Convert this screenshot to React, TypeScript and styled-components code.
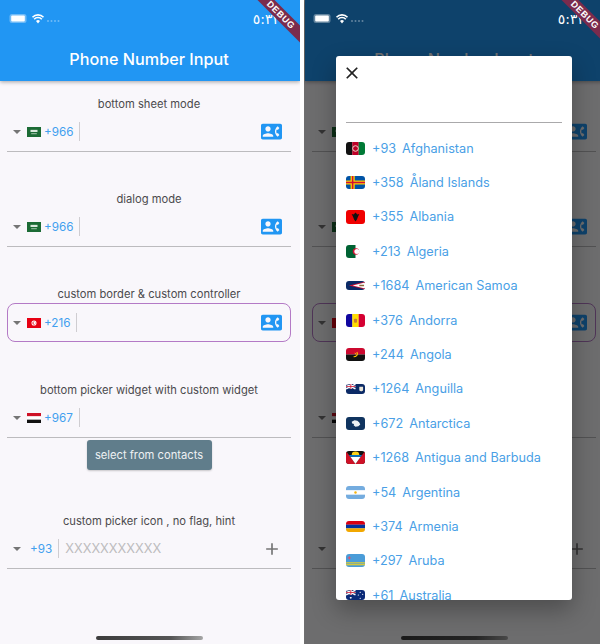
import React from "react";
import styled, { createGlobalStyle } from "styled-components";
import { MdAdd, MdClose, MdContactPhone } from "react-icons/md";

const GlobalStyle = createGlobalStyle`
    html, body {
        margin: 0;
        padding: 0;
        background: #fff;
        font-family: Inter, Roboto, "Noto Sans", sans-serif;
    }
`;

const Page = styled.div`
    display: flex;
    width: 600px;
    height: 644px;
    gap: 4px;
    overflow: hidden;
`;

const Frame = styled.div<{ $width: number }>`
    position: relative;
    flex: none;
    width: ${p => p.$width}px;
    height: 644px;
    overflow: hidden;
`;

const Screen = styled.div<{ $inset: number }>`
    display: flex;
    flex-direction: column;
    width: 300px;
    height: 644px;
    margin-left: ${p => p.$inset}px;
    background: #f9f7fb;
`;

const AppBar = styled.header`
    flex: none;
    box-sizing: border-box;
    height: 81px;
    padding: 48px 2px 0 0;
    background: #2196f3;
    box-shadow: 0 1px 4px rgba(0, 0, 0, 0.35);
    color: #fff;
`;

const StatusBar = styled.div<{ $right: number }>`
    position: absolute;
    top: 0;
    left: 0;
    right: 0;
    display: flex;
    align-items: center;
    height: 37px;
    padding: 0 ${p => p.$right}px 0 9px;
    color: #fff;
`;

const Time = styled.span`
    margin-left: auto;
    font-family: "DejaVu Sans", sans-serif;
    font-size: 14px;
    font-weight: 500;
`;

const Title = styled.h1`
    margin: 0;
    text-align: center;
    font-size: 16.2px;
    line-height: 22px;
    font-weight: 500;
`;

const Section = styled.section<{ $gap: number }>`
    margin-top: ${p => p.$gap}px;
    padding: 0 9px 0 7px;
`;

const Label = styled.div`
    height: 16px;
    text-align: center;
    font-size: 11.2px;
    line-height: 17px;
    color: #4b4a4d;
`;

const Field = styled.div<{ $outlined?: boolean }>`
    display: flex;
    align-items: center;
    box-sizing: border-box;
    height: ${p => (p.$outlined ? 39 : 40)}px;
    margin: ${p => (p.$outlined ? "1px 0" : "0")};
    padding: 0 9px 0 6px;
    border-bottom: 1px solid #bcbbbe;
    ${p => p.$outlined && `
        border: 1px solid #b47ac6;
        border-radius: 8px;
        padding: 0 8px 0 5px;
    `}
`;

const Caret = styled.i<{ $bare?: boolean }>`
    flex: none;
    width: 0;
    height: 0;
    border-left: 4px solid transparent;
    border-right: 4px solid transparent;
    border-top: 4px solid #757575;
    margin-right: ${p => (p.$bare ? 9 : 6)}px;
`;

const FieldFlag = styled.span`
    display: flex;
    flex: none;
    width: 14px;
    height: 10px;
    margin-right: 3px;
    svg {
        width: 100%;
        height: 100%;
    }
`;

const Code = styled.span`
    font-size: 11.7px;
    color: #42a0ef;
`;

const Divider = styled.i`
    flex: none;
    width: 1px;
    height: 19px;
    margin: 0 6px;
    background: #cfcdd1;
`;

const Hint = styled.span`
    font-size: 12.8px;
    color: #bdbcbe;
`;

const Trailing = styled.span<{ $color: string }>`
    display: flex;
    margin-left: auto;
    color: ${p => p.$color};
`;

const ContactsButton = styled.button`
    display: block;
    width: 125px;
    height: 30px;
    margin: 2px auto 0;
    padding: 0;
    border: none;
    border-radius: 3px;
    background: #607d8b;
    box-shadow: 0 1px 2px rgba(0, 0, 0, 0.2);
    font-family: inherit;
    font-size: 11.2px;
    color: #eef1f3;
`;

const HomeBar = styled.div`
    flex: none;
    align-self: center;
    width: 107px;
    height: 4px;
    margin: auto 0 4px -2px;
    border-radius: 2px;
    background: linear-gradient(90deg, #3c3c3c, #555 70%, #a5a5a5);
`;

const Scrim = styled.div`
    position: absolute;
    inset: 0;
    background: rgba(0, 0, 0, 0.56);
`;

const Banner = styled.div<{ $edge: number }>`
    position: absolute;
    top: 9px;
    right: ${p => p.$edge}px;
    width: 80px;
    height: 12px;
    transform: rotate(45deg);
    background: #7a2b4d;
    text-align: center;
    font-family: "Liberation Sans", sans-serif;
    font-size: 9px;
    line-height: 12px;
    font-weight: 700;
    letter-spacing: 0.6px;
    color: #fff;
`;

const Dialog = styled.div`
    position: absolute;
    top: 56px;
    left: 32px;
    box-sizing: border-box;
    width: 236px;
    height: 544px;
    padding: 0 10px;
    overflow: hidden;
    border-radius: 3px;
    background: #fff;
    box-shadow: 0 10px 24px rgba(0, 0, 0, 0.3);
`;

const CloseRow = styled.div`
    display: flex;
    align-items: center;
    height: 34px;
    margin-left: -4px;
    color: #222;
`;

const SearchBox = styled.div`
    height: 32px;
    border-bottom: 1px solid #aaa9ab;
`;

const CountryList = styled.ul`
    margin: 8px 0 0;
    padding: 0;
    list-style: none;
`;

const CountryRow = styled.li`
    display: flex;
    align-items: center;
    gap: 6px;
    height: 34.4px;
    font-size: 12.7px;
    white-space: nowrap;
    color: #4a9fe6;
`;

const RowFlag = styled.span<{ $height: number }>`
    display: flex;
    flex: none;
    width: 19px;
    height: ${p => p.$height}px;
    margin-right: 1px;
    overflow: hidden;
    border-radius: 3px;
    svg {
        width: 100%;
        height: 100%;
    }
`;

type FlagId =
    | "sa" | "tn" | "ye" | "af" | "ax" | "al" | "dz" | "as" | "ad" | "ao"
    | "ai" | "aq" | "ag" | "ar" | "am" | "aw" | "au";

const Stripes = ({ colors }: { colors: string[] }) => <>
    {colors.map((c, i) => <rect key={c + i} x="0" y={i * 14 / colors.length} width="20" height={14 / colors.length + 0.1} fill={c} />)}
</>;

const Columns = ({ colors }: { colors: string[] }) => <>
    {colors.map((c, i) => <rect key={c + i} x={i * 20 / colors.length} y="0" width={20 / colors.length + 0.1} height="14" fill={c} />)}
</>;

const Union = () => <>
    <rect width="10" height="7" fill="#1a2a6c" />
    <path d="M0 0L10 7M10 0L0 7" stroke="#fff" strokeWidth="1.6" />
    <path d="M5 0V7M0 3.5H10" stroke="#fff" strokeWidth="2.2" />
    <path d="M5 0V7M0 3.5H10" stroke="#d0213a" strokeWidth="1" />
</>;

const flagArt: Record<FlagId, React.ReactNode> = {
    sa: <>
        <rect width="20" height="14" fill="#1c6b35" />
        <rect x="5" y="4" width="10" height="3" fill="#d9e8dc" />
        <rect x="6" y="9" width="8" height="1" fill="#d9e8dc" />
    </>,
    tn: <>
        <rect width="20" height="14" fill="#e70013" />
        <circle cx="10" cy="7" r="3.6" fill="#fff" />
        <circle cx="10" cy="7" r="2.2" fill="#e70013" />
        <circle cx="10.7" cy="7" r="1.6" fill="#fff" />
    </>,
    ye: <Stripes colors={["#ce1126", "#fff", "#111"]} />,
    af: <>
        <Columns colors={["#111", "#be0027", "#007a36"]} />
        <circle cx="10" cy="7" r="3" fill="none" stroke="#e8e2d0" strokeWidth="1" />
    </>,
    ax: <>
        <rect width="20" height="14" fill="#0053a5" />
        <path d="M7 0V14M0 7H20" stroke="#ffce00" strokeWidth="4.4" />
        <path d="M7 0V14M0 7H20" stroke="#d21034" strokeWidth="1.6" />
    </>,
    al: <>
        <rect width="20" height="14" fill="#f00000" />
        <path d="M10 2.5L12 4.5L14 4L12.5 7L11.5 9.5L10 11.5L8.5 9.5L7.5 7L6 4L8 4.5Z" fill="#111" />
    </>,
    dz: <>
        <rect width="20" height="14" fill="#fff" />
        <rect width="10" height="14" fill="#006233" />
        <circle cx="10.5" cy="7" r="3.4" fill="#d21034" />
        <circle cx="11.5" cy="7" r="2.7" fill="#fff" />
    </>,
    as: <>
        <rect width="20" height="14" fill="#0b2a66" />
        <path d="M20 1L3 7L20 13Z" fill="#d21034" />
        <path d="M20 2.5L7 7L20 11.5Z" fill="#fff" />
        <path d="M14 6H19V8H14Z" fill="#8a6a3a" />
    </>,
    ad: <>
        <Columns colors={["#10069f", "#fedd00", "#d50032"]} />
        <rect x="8.4" y="5" width="3.2" height="4.4" rx="1" fill="#c7802e" />
    </>,
    ao: <>
        <Stripes colors={["#cc092f", "#111"]} />
        <path d="M8 9.5C11 9.5 13 7 11.5 4.2" fill="none" stroke="#ffcb00" strokeWidth="1.1" />
        <path d="M9 4.5L10 6L11 4.8L10.5 6.8L9.5 6.6Z" fill="#ffcb00" />
    </>,
    ai: <>
        <rect width="20" height="14" fill="#0b2a66" />
        <Union />
        <path d="M14 4H18V8.5C18 10 16 10.5 16 10.5C16 10.5 14 10 14 8.5Z" fill="#e9e5d8" />
    </>,
    aq: <>
        <rect width="20" height="14" fill="#10345f" />
        <path d="M6 5L9 3.5L12 4L14 6L15 8L13 10L10 10.5L8 9L8.5 7.5L6.5 7Z" fill="#eef2f4" />
    </>,
    ag: <>
        <rect width="20" height="14" fill="#111" />
        <path d="M0 0L10 14L20 0V14H0Z" fill="#ce1126" />
        <path d="M4.5 6.3H15.5L10 14Z" fill="#fff" />
        <path d="M3 4.2H17L15.5 6.3H4.5Z" fill="#0072c6" />
        <path d="M6 4.2A4 3.6 0 0 1 14 4.2Z" fill="#fcd116" />
    </>,
    ar: <>
        <Stripes colors={["#74acdf", "#fff", "#74acdf"]} />
        <circle cx="10" cy="7" r="1.3" fill="#f6b40e" />
    </>,
    am: <Stripes colors={["#d90012", "#0033a0", "#f2a800"]} />,
    aw: <>
        <rect width="20" height="14" fill="#4a9cd8" />
        <rect y="9" width="20" height="1.1" fill="#f9d616" />
        <rect y="11" width="20" height="1.1" fill="#f9d616" />
        <path d="M3.5 2L4.1 3.6L5.7 4.2L4.1 4.8L3.5 6.4L2.9 4.8L1.3 4.2L2.9 3.6Z" fill="#e4506a" />
    </>,
    au: <>
        <rect width="20" height="14" fill="#0b2a78" />
        <Union />
        <circle cx="5" cy="11" r="1.1" fill="#fff" />
        <circle cx="15" cy="3" r="0.7" fill="#fff" />
        <circle cx="17.5" cy="6" r="0.7" fill="#fff" />
        <circle cx="13" cy="7" r="0.7" fill="#fff" />
        <circle cx="15" cy="11.5" r="0.7" fill="#fff" />
    </>,
};

const Flag = ({ id }: { id: FlagId }) => <svg viewBox="0 0 20 14" preserveAspectRatio="none">{flagArt[id]}</svg>;

const StatusIcons = () => <svg width="54" height="12" viewBox="0 0 54 12">
    <rect x="0.5" y="1" width="17" height="9" rx="2.5" fill="#fff" fillOpacity="0.35" />
    <rect x="2.2" y="2.6" width="13.6" height="5.8" rx="1" fill="#fff" />
    <path d="M23.5 4.2A7.6 7.6 0 0 1 34.5 4.2M25.2 6.2A5 5 0 0 1 32.8 6.2" fill="none" stroke="#fff" strokeWidth="1.6" />
    <path d="M27 8A2.8 2.8 0 0 1 31 8L29 10.5Z" fill="#fff" />
    {[39, 42.5, 46, 49.5].map(x => <circle key={x} cx={x} cy="8" r="1" fill="#fff" fillOpacity="0.35" />)}
</svg>;

// some flags in the list are wider than the others, so they come out shorter
const countries: { id: FlagId; code: string; name: string; height: number }[] = [
    { id: "af", code: "+93", name: "Afghanistan", height: 13 },
    { id: "ax", code: "+358", name: "Åland Islands", height: 13 },
    { id: "al", code: "+355", name: "Albania", height: 14 },
    { id: "dz", code: "+213", name: "Algeria", height: 13 },
    { id: "as", code: "+1684", name: "American Samoa", height: 9 },
    { id: "ad", code: "+376", name: "Andorra", height: 13 },
    { id: "ao", code: "+244", name: "Angola", height: 13 },
    { id: "ai", code: "+1264", name: "Anguilla", height: 10 },
    { id: "aq", code: "+672", name: "Antarctica", height: 13 },
    { id: "ag", code: "+1268", name: "Antigua and Barbuda", height: 13 },
    { id: "ar", code: "+54", name: "Argentina", height: 13 },
    { id: "am", code: "+374", name: "Armenia", height: 11 },
    { id: "aw", code: "+297", name: "Aruba", height: 13 },
    { id: "au", code: "+61", name: "Australia", height: 10 },
];

function PhoneField(props: { flag?: FlagId; code: string; outlined?: boolean; children?: React.ReactNode }) {
    return <Field $outlined={props.outlined}>
        <Caret $bare={!props.flag} />
        {props.flag && <FieldFlag><Flag id={props.flag} /></FieldFlag>}
        <Code>{props.code}</Code>
        <Divider />
        {props.children}
    </Field>;
}

const Contact = () => <Trailing $color="#2196f3"><MdContactPhone size={21} /></Trailing>;

function PhoneScreen({ inset }: { inset: number }) {
    return <Screen $inset={inset}>
        <AppBar>
            <Title>Phone Number Input</Title>
        </AppBar>
        <Section $gap={15}>
            <Label>bottom sheet mode</Label>
            <PhoneField flag="sa" code="+966"><Contact /></PhoneField>
        </Section>
        <Section $gap={39}>
            <Label>dialog mode</Label>
            <PhoneField flag="sa" code="+966"><Contact /></PhoneField>
        </Section>
        <Section $gap={39}>
            <Label>custom border &amp; custom controller</Label>
            <PhoneField flag="tn" code="+216" outlined><Contact /></PhoneField>
        </Section>
        <Section $gap={39}>
            <Label>bottom picker widget with custom widget</Label>
            <PhoneField flag="ye" code="+967" />
            <ContactsButton>select from contacts</ContactsButton>
        </Section>
        <Section $gap={43}>
            <Label>custom picker icon , no flag, hint</Label>
            <PhoneField code="+93">
                <Hint>XXXXXXXXXXX</Hint>
                <Trailing $color="#757575"><MdAdd size={20} /></Trailing>
            </PhoneField>
        </Section>
        <HomeBar />
    </Screen>;
}

function Status({ right }: { right: number }) {
    return <StatusBar $right={right}>
        <StatusIcons />
        <Time>٥:٣٢</Time>
    </StatusBar>;
}

export default function App() {
    return <Page>
        <GlobalStyle />
        <Frame $width={300}>
            <PhoneScreen inset={0} />
            <Status right={20} />
            <Banner $edge={-21}>DEBUG</Banner>
        </Frame>
        <Frame $width={296}>
            <PhoneScreen inset={1} />
            <Scrim />
            <Dialog>
                <CloseRow><MdClose size={20} /></CloseRow>
                <SearchBox />
                <CountryList>
                    {countries.map(c => <CountryRow key={c.id}>
                        <RowFlag $height={c.height}><Flag id={c.id} /></RowFlag>
                        <span>{c.code}</span>
                        <span>{c.name}</span>
                    </CountryRow>)}
                </CountryList>
            </Dialog>
            <Status right={15} />
            <Banner $edge={-25}>DEBUG</Banner>
        </Frame>
    </Page>;
}
